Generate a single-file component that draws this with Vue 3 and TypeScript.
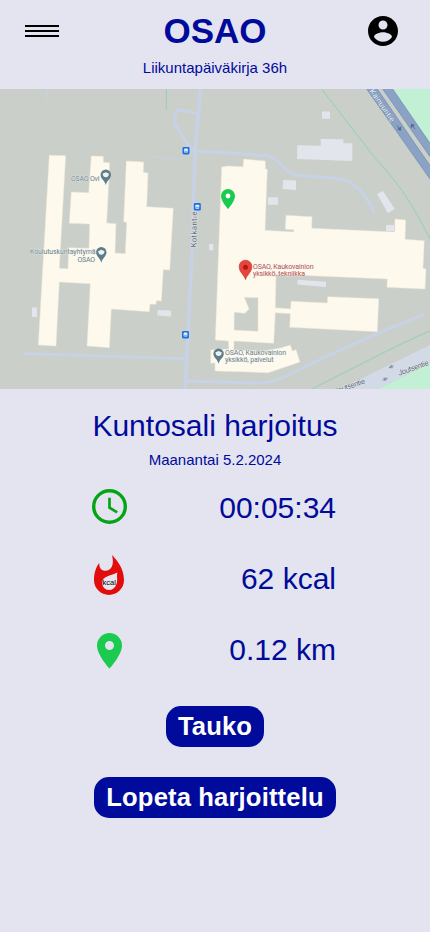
<script setup lang="ts">
interface Metric {
  id: 'time' | 'energy' | 'distance'
  value: string
}

interface Place {
  x: number
  y: number
}

const metrics: Metric[] = [
  { id: 'time', value: '00:05:34' },
  { id: 'energy', value: '62 kcal' },
  { id: 'distance', value: '0.12 km' },
]

const busStops: Place[] = [
  { x: 186, y: 150.7 },
  { x: 197.3, y: 206.8 },
  { x: 185.5, y: 334.7 },
]

const places: Place[] = [
  { x: 105.8, y: 184.5 },
  { x: 101.3, y: 262 },
  { x: 218.6, y: 363.3 },
]
</script>

<template>
  <main class="screen">
    <header class="header">
      <button class="menu" type="button"><i></i><i></i><i></i></button>
      <div class="brand">
        <h1>OSAO</h1>
        <p>Liikuntapäiväkirja 36h</p>
      </div>
      <button class="account" type="button">
        <svg viewBox="2 2 20 20" width="30" height="30">
          <path d="M12 2C6.480 2 2 6.480 2 12s4.480 10 10 10 10-4.480 10-10S17.520 2 12 2zm0 3c1.660 0 3 1.340 3 3s-1.340 3-3 3-3-1.340-3-3 1.340-3 3-3zm0 14.200c-2.500 0-4.710-1.280-6-3.220.030-1.990 4-3.080 6-3.080 1.990 0 5.970 1.090 6 3.080-1.290 1.940-3.500 3.220-6 3.220z" />
        </svg>
      </button>
    </header>

    <svg class="map" viewBox="0 89 430 300" width="430" height="300">
      <rect y="89" width="430" height="300" fill="#cacfca" />

      <!-- parkland -->
      <path d="M392 89H430V144Z M378 389L430 363V389Z" fill="#c2f0d5" />

      <!-- paths -->
      <g fill="none" stroke="#94cfb5" stroke-width="1">
        <path d="M321.700 89L375 158Q391 175 401.700 190Q416 211 430 239" />
        <path d="M311.700 389L371 359Q404 342 430 331" />
        <path d="M166.300 89V109" />
      </g>

      <!-- highway -->
      <path d="M366.700 89H377.300L430 165.500V179Z M382.700 89H392.700L430 143.300V156.700Z" fill="#8aa3c4" />
      <path d="M366.700 89L430 179M377.300 89L430 165.500M382.700 89L430 156.700M392.700 89L430 143.300" fill="none" stroke="#7890b4" stroke-width=".8" />

      <!-- streets -->
      <path d="M340 389L430 345V363L378 389Z" fill="#d2dae7" />
      <g fill="none" stroke="#c8d2e6" stroke-linejoin="round">
        <path d="M200.500 89L195 151L192 252L185.300 389" stroke-width="3.600" />
        <path d="M197 113.500L184 110.500L176.700 110Q174 117 175 124.300L192 151" stroke-width="2.800" />
        <path d="M195 151L215 152L268 156C279 157 284 173 296 175L337 178.500C354 180 367 195 374.700 214" stroke-width="3" />
        <path d="M152 156Q181 164 193 152" stroke-width="1" />
        <path d="M24 353.700L185 358.700" stroke-width="2.800" />
        <path d="M186.700 381L260 383Q274 383 290 374Q350 344 423.700 314.300" stroke-width="3" />
        <path d="M47 89V101" stroke-width="1" />
      </g>

      <!-- outbuildings -->
      <g fill="#e2e5ec">
        <path d="M297.300 145.300L320.700 145.700V139L343.300 139.300V143.300H352.300V161L297 159Z" />
        <path d="M322 111.500H330V118.800H322Z M283 180L296 180.500V190L282.700 189Z M268 197.300H278V204.700H268Z" />
        <path d="M377 194L383 191L394.700 209L388 213.300Z M386 225H394V231H386Z M209 244H213.300V250.300H209Z" />
        <path d="M32 307.500H37V317H32Z M157.700 310L171 310.500V316.500L157.300 315.500Z M297.700 279.800L326 281.700V287L297.300 284.500Z" />
      </g>

      <!-- school buildings -->
      <g fill="#fef9ed" stroke="#ece6d2" stroke-width=".5" fill-rule="evenodd">
        <path d="M49.300 155.300L65.700 155.700L59.300 268.300L68 268.700L68.700 247.700L89 248.300L89.700 224L69.300 223.300L71.300 192L88.700 192.700L91.300 156L103.300 156.300V162.300L109.700 162.700L106.700 223L116 223.700L115 253L125.300 253.700L126.700 222.300L123.700 222L126.300 161L143.700 162L143.300 172.300L148 173L146.700 206.700L173.300 208.300L169.700 270L163.300 269.700L161.300 301L156.300 300.700L156 304.300L150 304L149.300 311.700L111.300 309L109.300 347.700L87 346L90.300 283.700L59.300 282L56 346L38.300 345Z" />
        <path d="M221.700 167L228 166L243 166.700L243.700 159L265.300 161V169L267.300 169.300L265 230.300L293.700 232L294 229.700L285.300 229.300L286 215.300L312 216.700L311.700 228.300L394.700 232L395 219L405.700 220L405 239.300L424.300 240.700L423 268.300L426 269L425 289L387 287.300L387.300 279L276 274.300L275.300 307.700L290.700 309L291 301.300L327.300 303L327.700 296.700L378.700 298.700L377.300 331.700L289.700 327.300L290.300 313.700L275.300 312.700L273.700 343.300L234 341L233.700 350L264 351L281.700 347.700L290.300 345L292.300 351L296 349.700L300 362L268.300 372.700L215 371V363L210.700 363.300V350L229 349L228.300 341L215.300 340Z M244.300 297.300L258 297.700V331.300L234 330L234.300 312.300L245 313.300L249 309Z" />
      </g>

      <g v-for="stop in busStops" :key="stop.y" :transform="`translate(${stop.x} ${stop.y})`">
        <rect x="-3.500" y="-3.700" width="7" height="7.400" rx="1.300" fill="#1b6fdf" />
        <rect x="-1.900" y="-2.100" width="3.800" height="4" rx=".6" fill="#e4efff" />
        <path d="M-1.500 .6H1.500" stroke="#4689e4" stroke-width=".7" />
      </g>

      <g v-for="place in places" :key="place.y" :transform="`translate(${place.x} ${place.y})`">
        <path d="M0 .5C-1-4-5.200-5.500-5.200-9.700A5.200 5.200 0 0 1 5.200-9.700C5.200-5.500 1-4 0 .5Z" fill="#5d7c8c" />
        <path d="M-3.300-10.800L0-12.300L3.300-10.800L2.400-8.200Q0-6.300-2.400-8.200Z" fill="#edf3f2" />
      </g>

      <g class="labels">
        <text x="71" y="181" textLength="28.500">OSAO Ovi</text>
        <text x="30" y="253.700" textLength="65.500">Koulutuskuntayhtymä</text>
        <text x="77.500" y="261.500" textLength="17.500">OSAO</text>
        <text x="225" y="355.300" textLength="61">OSAO, Kaukovainion</text>
        <text x="225" y="362.300" textLength="48.500">yksikkö, palvelut</text>
        <g class="active">
          <text x="253" y="269" textLength="60.500">OSAO, Kaukovainion</text>
          <text x="253" y="276" textLength="52">yksikkö, tekniikka</text>
        </g>
        <g class="street">
          <text transform="translate(196.300 247.500) rotate(-89)" textLength="36">Kotkantie</text>
          <text class="light" transform="translate(369.300 91) rotate(55.500)" textLength="38">Kainuuntie</text>
          <text transform="translate(335.500 394) rotate(-20)" textLength="32">Joutsentie</text>
          <text transform="translate(399 375.800) rotate(-20)" textLength="32">Joutsentie</text>
        </g>
      </g>

      <!-- driving directions -->
      <g fill="#526b8c" stroke="#526b8c" stroke-width=".8">
        <path d="M397 125.500L400.500 130.300L401 127L397.800 129.300L400.500 130.300" />
        <path d="M415 129L411.500 124.200L411 127.500L414.200 125.200L411.500 124.200" />
        <path d="M394 365.500L389 367.700L391.500 365L392.500 367.800L389 367.700" fill="#8997aa" stroke="#8997aa" />
        <path d="M382.300 380.400L387.300 378.200L384.800 380.900L383.800 378.100L387.300 378.200" fill="#8997aa" stroke="#8997aa" />
      </g>

      <path d="M245.500 279.500C244.500 275 239.200 272.500 239.200 266.500A6.300 6.300 0 0 1 251.800 266.500C251.800 272.500 246.500 275 245.500 279.500Z" fill="#e9443b" stroke="#c5362e" stroke-width=".7" />
      <circle cx="245.500" cy="267.200" r="2.500" fill="#a81b18" />
      <path d="M228 189A7 7 0 0 0 221 196C221 201.200 228 209 228 209S235 201.200 235 196A7 7 0 0 0 228 189Z" fill="#1bcb50" />
      <circle cx="228" cy="196" r="2.400" fill="#fff" />
    </svg>

    <section class="session">
      <h2>Kuntosali harjoitus</h2>
      <p class="date">Maanantai 5.2.2024</p>

      <ul class="metrics">
        <li v-for="metric in metrics" :key="metric.id">
          <span class="icon">
            <svg v-if="metric.id === 'time'" viewBox="0 0 36 37" width="36" height="37">
              <circle cx="17.500" cy="17.500" r="15.800" fill="none" stroke="#05a414" stroke-width="3.400" />
              <path d="M17.500 8.800V18.700L25.200 23.300" fill="none" stroke="#05a414" stroke-width="2.700" />
            </svg>
            <svg v-else-if="metric.id === 'energy'" viewBox="0 4 36 41" width="36" height="41">
              <path d="M20 1C24 5 32 14 32 26A15 15 0 0 1 2 26C2 19 4 13 7.300 9C7 14 9.500 16.800 13.500 16.800C19.500 16.500 22.500 11 20 1Z" fill="#e20c0c" />
              <path d="M25.300 18.500C24.500 23 26 26.500 24.500 30C23 34 20.500 36 17 36C13 36 10.300 33 10.300 29C10.300 21.500 18 22.500 25.300 18.500Z" fill="#e8e5ef" />
              <text x="10.500" y="31.200" textLength="13.500" class="unit">kcal</text>
            </svg>
            <svg v-else viewBox="0 -2 36 37" width="36" height="37">
              <path d="M17.500 0A12.500 12.500 0 0 0 5 12.500C5 22 17.500 35.700 17.500 35.700S30 22 30 12.500A12.500 12.500 0 0 0 17.500 0ZM17.500 17A4.500 4.500 0 1 1 17.500 8A4.500 4.500 0 0 1 17.500 17Z" fill="#1bcb50" />
            </svg>
          </span>
          <span class="value">{{ metric.value }}</span>
        </li>
      </ul>

      <div class="actions">
        <button type="button">Tauko</button>
        <button type="button">Lopeta harjoittelu</button>
      </div>
    </section>
  </main>
</template>

<style>
body {
  background: #e4e4f0;
}
</style>

<style scoped>
.screen {
  box-sizing: border-box;
  width: 430px;
  min-height: 932px;
  background: #e4e4f0;
  color: #000a9b;
  font-family: "Liberation Sans", Arial, sans-serif;
}

h1,
h2,
p,
ul {
  margin: 0;
  padding: 0;
  font-weight: 400;
}

button {
  border: 0;
  padding: 0;
  background: none;
  font-family: inherit;
}

svg {
  display: block;
}

.icon svg {
  overflow: visible;
}

.header {
  display: grid;
  grid-template-columns: 34px 1fr 30px;
  align-items: start;
  height: 89px;
  padding: 0 32px 0 25px;
  box-sizing: border-box;
}

.menu {
  display: flex;
  flex-direction: column;
  gap: 3px;
  margin-top: 25px;
}

.menu i {
  width: 34px;
  height: 2px;
  background: #000;
}

.brand {
  padding-top: 10px;
  padding-left: 3px;
  text-align: center;
}

.brand h1 {
  font-size: 35px;
  line-height: 42px;
  font-weight: 700;
}

.brand p {
  margin-top: 7px;
  font-size: 15px;
  line-height: 17px;
}

.account {
  margin-top: 16px;
}

.labels text {
  fill: #6c8390;
  font-family: Roboto, sans-serif;
  font-size: 7px;
  paint-order: stroke;
  stroke: #f3f3ec;
  stroke-width: 0.6px;
}

.labels .active text {
  fill: #b95054;
}

.labels .street text {
  fill: #59677c;
  font-size: 7.8px;
}

.labels .street .light {
  fill: #f4f8ff;
  stroke: #657e9f;
}

.session {
  display: flex;
  flex-direction: column;
  align-items: center;
  padding-top: 19px;
}

.session h2 {
  font-size: 30px;
  line-height: 35px;
}

.date {
  margin-top: 8px;
  font-size: 15px;
  line-height: 17px;
}

.metrics {
  display: grid;
  grid-auto-rows: 71px;
  width: 244px;
  margin-top: 4px;
  list-style: none;
}

.metrics li {
  display: flex;
  align-items: center;
  justify-content: space-between;
}

.icon {
  margin-left: -1px;
}

.value {
  padding-right: 1px;
  font-size: 30px;
  line-height: 35px;
}

.unit {
  fill: #000;
  font-family: "Liberation Sans", sans-serif;
  font-size: 7.5px;
}

.actions {
  display: flex;
  flex-direction: column;
  align-items: center;
  gap: 30px;
  margin-top: 21px;
}

.actions button {
  height: 41px;
  padding: 0 12px;
  border-radius: 15px;
  background: #000a9b;
  color: #fff;
  font-size: 25.600px;
  line-height: 41px;
  font-weight: 700;
  letter-spacing: 0.15px;
}
</style>
